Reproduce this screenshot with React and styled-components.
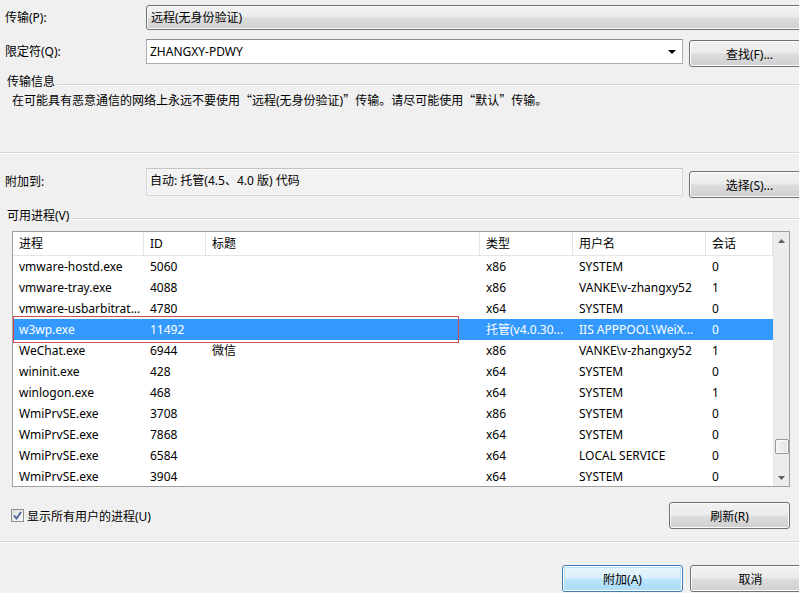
import React from "react";
import styled, { createGlobalStyle } from "styled-components";

const GlobalStyle = createGlobalStyle`
  html, body {
    margin: 0;
    padding: 0;
    background: #f0f0f0;
  }
  body {
    font-family: "Noto Sans", "Noto Sans CJK SC", sans-serif;
    font-size: 12px;
    color: #000;
  }
`;

const Dialog = styled.div`
  width: 799px;
  height: 593px;
  overflow: hidden;
  background: #f0f0f0;
  display: flex;
  flex-direction: column;
`;

const FieldRow = styled.div`
  display: flex;
  align-items: flex-start;
  width: 830px;
  height: ${(p) => p.$h}px;
  margin-top: ${(p) => p.$top}px;
`;

const Label = styled.div`
  width: 141px;
  padding-left: 5px;
  height: ${(p) => p.$h}px;
  line-height: ${(p) => p.$h}px;
  flex: none;
`;

const ReadonlyCombo = styled.div`
  flex: 1;
  height: 25px;
  box-sizing: border-box;
  border: 1px solid #707070;
  border-radius: 3px;
  background: linear-gradient(#f2f2f2 0%, #ebebeb 48%, #dddddd 52%, #cfcfcf 100%);
  box-shadow: inset 0 0 0 1px #fbfbfb;
  padding-left: 4px;
  line-height: 23px;
`;

const EditCombo = styled.div`
  width: 537px;
  height: 25px;
  box-sizing: border-box;
  border: 1px solid #abadb3;
  border-top-color: #8e8f8f;
  background: #fff;
  display: flex;
  align-items: center;
  padding-left: 3px;
  padding-right: 6px;
`;

const ComboText = styled.span`
  flex: 1;
`;

const Arrow = styled.span`
  width: 0;
  height: 0;
  border-left: 4px solid transparent;
  border-right: 4px solid transparent;
  border-top: 4px solid #000;
`;

const ReadonlyBox = styled.div`
  width: 537px;
  height: 28px;
  box-sizing: border-box;
  border: 1px solid #d6d6d6;
  border-top-color: #c4c4c4;
  background: #f2f2f2;
  box-shadow: inset 0 0 0 1px #f8f8f8;
  padding-left: 3px;
  line-height: 24px;
`;

const Button = styled.button`
  width: 121px;
  height: ${(p) => p.$h || 27}px;
  margin-left: ${(p) => p.$ml || 6}px;
  margin-top: ${(p) => p.$mt || 0}px;
  flex: none;
  box-sizing: border-box;
  font: inherit;
  color: #000;
  border: 1px solid ${(p) => (p.$default ? "#3c7fb1" : "#707070")};
  border-radius: 3px;
  background: ${(p) =>
    p.$default
      ? "linear-gradient(#eaf6fd 0%, #d9f0fc 48%, #bee6fd 52%, #a7d9f5 100%)"
      : "linear-gradient(#f2f2f2 0%, #ebebeb 48%, #dddddd 52%, #cfcfcf 100%)"};
  box-shadow: ${(p) =>
    p.$default
      ? "inset 0 0 0 1px #fcfcfc, inset 0 0 0 2px #b6e2f9"
      : "inset 0 0 0 1px #fcfcfc"};
  padding: 0;
`;

const GroupHeader = styled.div`
  display: flex;
  align-items: center;
  margin-top: ${(p) => p.$top}px;
  height: 16px;
  padding-left: 7px;
`;

const GroupTitle = styled.span`
  line-height: 16px;
  padding-right: 2px;
`;

const GroupLine = styled.span`
  flex: 1;
  height: 1px;
  margin-top: 5px;
  background: #d5d5d5;
  border-bottom: 1px solid #fff;
`;

const InfoText = styled.div`
  padding-left: 12px;
  margin-top: 1px;
  height: 18px;
  line-height: 18px;
`;

const Quote = styled.span`
  font-family: "Noto Sans CJK SC", sans-serif;
  display: inline-block;
  width: 12px;
  text-align: ${(p) => (p.$open ? "right" : "left")};
`;

const Separator = styled.div`
  margin-top: ${(p) => p.$top}px;
  height: 1px;
  background: #d5d5d5;
  border-bottom: 1px solid #fff;
`;

const Table = styled.div`
  margin-top: ${(p) => p.$top}px;
  margin-left: 12px;
  width: 778px;
  height: 256px;
  box-sizing: border-box;
  border: 1px solid #a0a0a0;
  background: #fff;
  display: flex;
  overflow: hidden;
`;

const TableMain = styled.div`
  width: 760px;
  display: flex;
  flex-direction: column;
`;

const COLS = "131px 62px 274px 93px 133px 67px";

const HeaderRow = styled.div`
  display: grid;
  grid-template-columns: ${COLS};
  height: 23px;
  border-bottom: 1px solid #e5e5e5;
`;

const HeaderCell = styled.div`
  padding-left: 6px;
  line-height: 23px;
  border-right: 1px solid #e5e5e5;
  white-space: nowrap;
  overflow: hidden;
`;

const Body = styled.div`
  position: relative;
  flex: 1;
`;

const Row = styled.div`
  display: grid;
  grid-template-columns: ${COLS};
  height: 21px;
  background: ${(p) => (p.$selected ? "#3399ff" : "transparent")};
  color: ${(p) => (p.$selected ? "#fff" : "#000")};
`;

const Cell = styled.div`
  padding-left: 6px;
  line-height: 21px;
  white-space: nowrap;
  overflow: hidden;
`;

const Marker = styled.div`
  position: absolute;
  left: 0;
  top: 60px;
  width: 446px;
  height: 27px;
  box-sizing: border-box;
  border: 1px solid #cc4b55;
  pointer-events: none;
`;

const ScrollBar = styled.div`
  width: 16px;
  background: #ececec;
  border-left: 1px solid #e8e8e8;
  display: flex;
  flex-direction: column;
  align-items: center;
`;

const ScrollArrow = styled.div`
  height: 17px;
  display: flex;
  align-items: center;
  justify-content: center;
`;

const Track = styled.div`
  flex: 1;
  width: 100%;
`;

const Thumb = styled.div`
  margin-top: 190px;
  margin-left: 1px;
  width: 14px;
  height: 15px;
  box-sizing: border-box;
  border: 1px solid #979797;
  border-radius: 2px;
  background: linear-gradient(90deg, #f3f3f3, #e2e2e2);
  box-shadow: inset 0 0 0 1px #fafafa;
`;

const BottomRow = styled.div`
  display: flex;
  align-items: center;
  margin-top: ${(p) => p.$top}px;
  width: 790px;
  height: 27px;
`;

const CheckLabel = styled.label`
  display: flex;
  align-items: center;
  padding-left: 11px;
  flex: 1;
  gap: 3px;
`;

const CheckBox = styled.span`
  width: 13px;
  height: 13px;
  box-sizing: border-box;
  border: 1px solid #8e8f8f;
  background: linear-gradient(135deg, #dcdcdc, #fbfbfb);
  display: flex;
  align-items: center;
  justify-content: center;
`;

const ActionRow = styled.div`
  display: flex;
  justify-content: flex-end;
  margin-top: ${(p) => p.$top}px;
  width: 811px;
`;

const rows = [
  ["vmware-hostd.exe", "5060", "", "x86", "SYSTEM", "0"],
  ["vmware-tray.exe", "4088", "", "x86", "VANKE\\v-zhangxy52", "1"],
  ["vmware-usbarbitrat...", "4780", "", "x64", "SYSTEM", "0"],
  ["w3wp.exe", "11492", "", "托管(v4.0.30...", "IIS APPPOOL\\WeiX...", "0", true],
  ["WeChat.exe", "6944", "微信", "x86", "VANKE\\v-zhangxy52", "1"],
  ["wininit.exe", "428", "", "x64", "SYSTEM", "0"],
  ["winlogon.exe", "468", "", "x64", "SYSTEM", "1"],
  ["WmiPrvSE.exe", "3708", "", "x86", "SYSTEM", "0"],
  ["WmiPrvSE.exe", "7868", "", "x64", "SYSTEM", "0"],
  ["WmiPrvSE.exe", "6584", "", "x64", "LOCAL SERVICE", "0"],
  ["WmiPrvSE.exe", "3904", "", "x64", "SYSTEM", "0"],
];

const headers = ["进程", "ID", "标题", "类型", "用户名", "会话"];

function ArrowIcon({ up }) {
  return (
    <svg width="7" height="4" viewBox="0 0 7 4">
      <path d={up ? "M0 4 L3.5 0 L7 4 Z" : "M0 0 L3.5 4 L7 0 Z"} fill="#606060" />
    </svg>
  );
}

export default function App() {
  return (
    <>
      <GlobalStyle />
      <Dialog>
        <FieldRow $top={5} $h={25}>
          <Label $h={25}>传输(P):</Label>
          <ReadonlyCombo>远程(无身份验证)</ReadonlyCombo>
        </FieldRow>

        <FieldRow $top={9} $h={28}>
          <Label $h={25}>限定符(Q):</Label>
          <EditCombo>
            <ComboText>ZHANGXY-PDWY</ComboText>
            <Arrow />
          </EditCombo>
          <Button $mt={1}>查找(F)...</Button>
        </FieldRow>

        <GroupHeader $top={7}>
          <GroupTitle>传输信息</GroupTitle>
          <GroupLine />
        </GroupHeader>
        <InfoText>
          在可能具有恶意通信的网络上永远不要使用<Quote $open>“</Quote>远程(无身份验证)
          <Quote>”</Quote>传输。请尽可能使用<Quote $open>“</Quote>默认<Quote>”</Quote>传输。
        </InfoText>

        <Separator $top={43} />

        <FieldRow $top={14} $h={31}>
          <Label $h={28}>附加到:</Label>
          <ReadonlyBox>自动: 托管(4.5、4.0 版) 代码</ReadonlyBox>
          <Button $mt={3}>选择(S)...</Button>
        </FieldRow>

        <GroupHeader $top={9}>
          <GroupTitle>可用进程(V)</GroupTitle>
          <GroupLine />
        </GroupHeader>

        <Table $top={7}>
          <TableMain>
            <HeaderRow>
              {headers.map((h) => (
                <HeaderCell key={h}>{h}</HeaderCell>
              ))}
            </HeaderRow>
            <Body>
              {rows.map((r, i) => (
                <Row key={i} $selected={r[6]}>
                  {r.slice(0, 6).map((c, j) => (
                    <Cell key={j}>{c}</Cell>
                  ))}
                </Row>
              ))}
              <Marker />
            </Body>
          </TableMain>
          <ScrollBar>
            <ScrollArrow>
              <ArrowIcon up />
            </ScrollArrow>
            <Track>
              <Thumb />
            </Track>
            <ScrollArrow>
              <ArrowIcon />
            </ScrollArrow>
          </ScrollBar>
        </Table>

        <BottomRow $top={15}>
          <CheckLabel>
            <CheckBox>
              <svg width="9" height="9" viewBox="0 0 9 9">
                <path d="M1 4.5 L3.5 7.5 L8 1" fill="none" stroke="#4a5f97" strokeWidth="1.8" />
              </svg>
            </CheckBox>
            显示所有用户的进程(U)
          </CheckLabel>
          <Button $ml={0}>刷新(R)</Button>
        </BottomRow>

        <Separator $top={12} />

        <ActionRow $top={22}>
          <Button $default>附加(A)</Button>
          <Button $ml={7}>取消</Button>
        </ActionRow>
      </Dialog>
    </>
  );
}
